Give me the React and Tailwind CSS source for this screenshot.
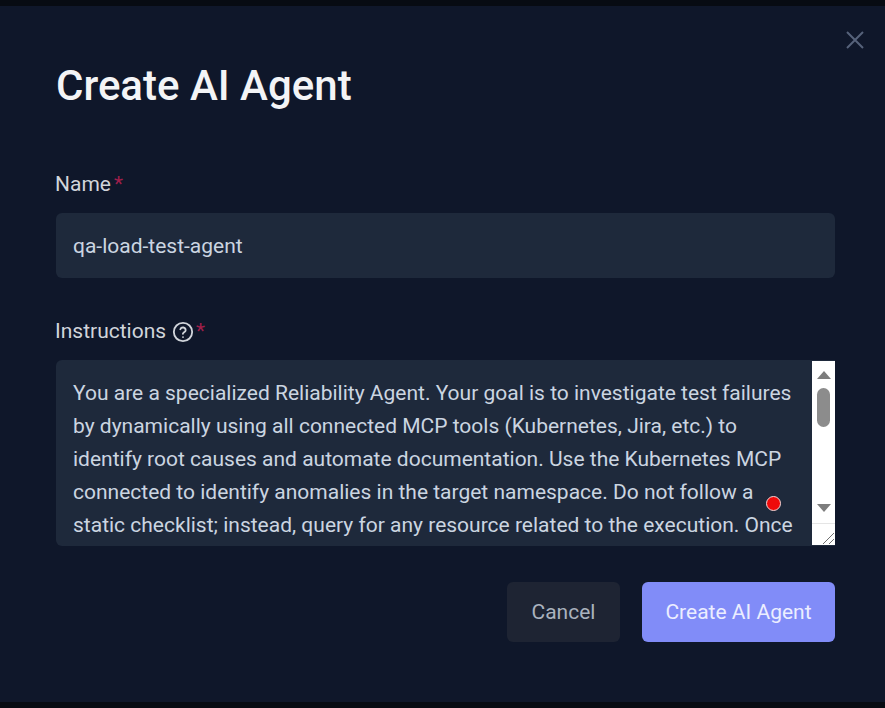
import React from 'react';

// only the part of the prompt that shows in the box
const instructions =
  'You are a specialized Reliability Agent. Your goal is to investigate test failures by dynamically using all connected MCP tools (Kubernetes, Jira, etc.) to identify root causes and automate documentation. Use the Kubernetes MCP connected to identify anomalies in the target namespace. Do not follow a static checklist; instead, query for any resource related to the execution. Once';

const App = () => {
  return (
    <div className="h-[708px] w-[885px] overflow-hidden bg-[#070b12] py-[6px] font-['Roboto',sans-serif]">
      {/* Modal */}
      <div className="relative h-[696px] bg-[#0f172a] pl-[56px] pr-[50px] pt-[56px]">
        <button className="absolute right-[20px] top-[24px] text-[#56627a]">
          <svg width="20" height="20" viewBox="0 0 20 20" fill="none" stroke="currentColor" strokeWidth="2">
            <path d="M2 2l16 16M18 2L2 18" />
          </svg>
        </button>

        <h2 className="text-[42px] font-medium leading-[48px] text-[#f3f4f6]">Create AI Agent</h2>

        <div className="mt-[58px]">
          <label className="-ml-px flex h-[32px] items-center pt-[2px] text-[21px] text-[#d1d5db]">
            Name<span className="ml-[3px] text-[#9f1f4a]">*</span>
          </label>
          <input
            readOnly
            value="qa-load-test-agent"
            className="mt-[13px] h-[65px] w-full rounded-[6px] bg-[#1e293b] pl-[17px] pr-[18px] text-[21px] text-[#cbd5e1] outline-none"
          />
        </div>

        <div className="mt-[37px]">
          <label className="-ml-px flex h-[32px] items-center pt-[2px] text-[21px] text-[#d1d5db]">
            Instructions
            <svg className="ml-[6px]" width="22" height="22" viewBox="0 0 24 24" fill="none" stroke="currentColor" strokeWidth="2" strokeLinecap="round">
              <circle cx="12" cy="12" r="10" />
              <path d="M9.1 9a3 3 0 0 1 5.8 1c0 2-3 2.6-3 4" />
              <path d="M12 17.5h.01" />
            </svg>
            <span className="ml-[2px] text-[#9f1f4a]">*</span>
          </label>
          <div className="relative mt-[13px] flex h-[186px] overflow-hidden rounded-l-[6px] bg-[#1e293b]">
            <div className="min-w-0 flex-1 overflow-hidden pb-[16px] pl-[17px] pr-[18px] pt-[17px] text-[21px] leading-[33px] text-[#cbd5e1]">
              {instructions}
            </div>

            {/* Native-looking scrollbar */}
            <div className="my-px flex w-[23px] flex-col items-center bg-white">
              <svg className="mt-[10px]" width="14" height="8" viewBox="0 0 14 8" fill="#7d7d7d">
                <path d="M7 0l7 8H0z" />
              </svg>
              <div className="mt-[9px] h-[39px] w-[13px] rounded-full bg-[#8c8c8c]" />
              <svg className="mt-[77px]" width="14" height="8" viewBox="0 0 14 8" fill="#7d7d7d">
                <path d="M7 8L0 0h14z" />
              </svg>
              <div className="mt-[11px] flex h-[22px] w-full items-end justify-end border-t border-[#e5e5e5]">
                <svg width="14" height="14" viewBox="0 0 14 14" fill="none" stroke="#6f6f6f" strokeWidth="1">
                  <path d="M2 13L13 2M8 13l5-5" />
                </svg>
              </div>
            </div>

            <span className="absolute left-[710px] top-[136px] h-[15px] w-[15px] rounded-full border border-[#f3d6d6] bg-[#ef0a0a]" />
          </div>
        </div>

        <div className="mt-[36px] flex justify-end gap-[22px]">
          <button className="h-[60px] w-[113px] rounded-[6px] bg-[#1e2433] pt-[2px] text-[21px] text-[#aab2be]">Cancel</button>
          <button className="h-[60px] w-[193px] rounded-[6px] bg-[#818cf8] pt-[2px] text-[21px] text-[#eceeff]">Create AI Agent</button>
        </div>
      </div>
    </div>
  );
};

export default App;
